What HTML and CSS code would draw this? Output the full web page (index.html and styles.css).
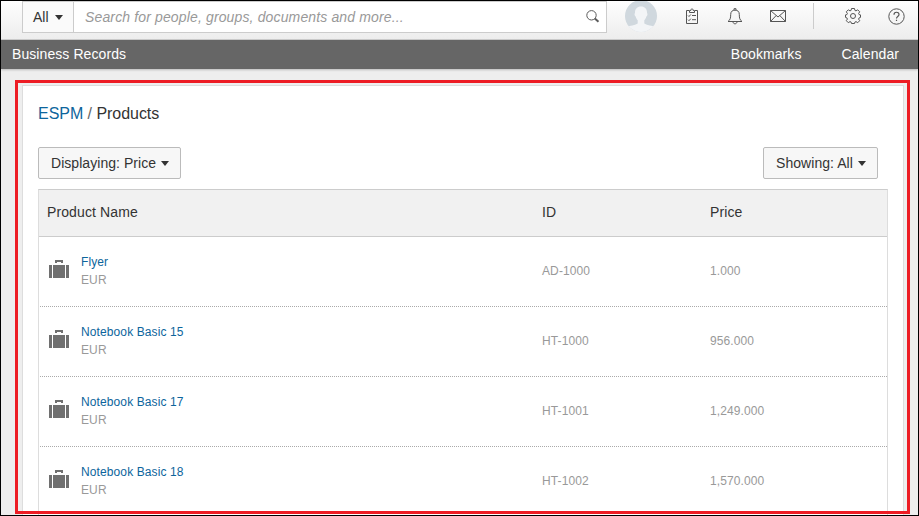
FILE: index.html
```html
<!DOCTYPE html>
<html lang="en">
<head>
<meta charset="utf-8">
<title>Products</title>
<link rel="stylesheet" href="styles.css">
</head>
<body>
<svg class="defs" width="0" height="0"><symbol id="case" viewBox="0 0 20 18"><path d="M0 5h3v13H0zM4 5h12v13H4zM17 5h3v13h-3zM6 0h8v3h-2V2H8v1H6z" fill="#707070"/></symbol></svg>
<div class="window">
  <header class="topbar">
    <div class="search">
      <div class="scope">All <i class="caret"></i></div>
      <div class="query"><span>Search for people, groups, documents and more...</span>
        <svg width="14" height="14" viewBox="0 0 14 14" fill="none" stroke="#5b5b5b"><circle cx="5.5" cy="5.3" r="4.700"/><path d="M8.800 8.400l3.700 3.300" stroke-width="2"/></svg>
      </div>
    </div>
    <svg class="avatar" width="32" height="32" viewBox="0 0 32 32"><defs><clipPath id="round"><circle cx="16" cy="15" r="16"/></clipPath></defs><g clip-path="url(#round)"><path d="M0-2h32v36H0z" fill="#d0d8de"/><path d="M16 5.500c-4 0-6.200 2.600-6 6.500-.8.600-.5 3 .7 3.600.4 1.700 1 2.700 2 3.700v3.200C9.500 24.500 5 24.500 2 26v8h28v-8c-3-1.500-7.500-1.500-10.700-3.500v-3.200c1-1 1.600-2 2-3.700 1.200-.6 1.500-3 .7-3.600.2-3.900-2-6.500-6-6.500z" fill="#f3f5f7"/></g></svg>
    <nav class="tools">
      <svg width="14" height="17" viewBox="0 0 14 17" fill="none" stroke="#555"><path d="M4 2.500H1.500v13h11v-13H10M4.500 4.500v-2l1.500-.2C6 .3 8 .3 8 2.300l1.500.2v2z"/><path d="M3 7.500l1 1 1.800-2M7 7.500h4M3 11.700l1 1 1.800-2M7 11.700h4"/></svg>
      <svg width="16" height="17" viewBox="0 0 16 17" fill="none" stroke="#555"><path d="M1 13.500c2.200-1.500 2.700-3.500 2.700-7C3.700 3.500 5.300 2.200 8 2.200s4.300 1.300 4.300 4.300c0 3.500.5 5.500 2.700 7zM7 2V.7h2V2M6 14c.3 2.400 3.700 2.400 4 0"/></svg>
      <svg width="17" height="13" viewBox="0 0 17 13" fill="none" stroke="#555"><path d="M.5.500h15v11H.5zM.5.500l7.500 6.500 7.500-6.500M.5 11.500l5.700-6M15.500 11.500l-5.700-6"/></svg>
      <i class="rule"></i>
      <svg width="16" height="16" viewBox="0 0 16 16" fill="none" stroke="#555"><circle cx="8" cy="8" r="2.500"/><path d="M6.500.5h3l.4 1.900 1.100.5 1.700-1.100 2 2-1.100 1.700.5 1.100 1.400.3v2.500l-1.400.5-.5 1.200 1.100 1.600-2 2-1.700-1.100-1.100.5-.4 1.400h-3l-.4-1.400-1.100-.5-1.700 1.100-2-2 1.100-1.600-.5-1.200-1.400-.5V6.900l1.400-.3.500-1.100-1.100-1.700 2-2L5 2.900l1.100-.5z"/></svg>
      <svg width="17" height="17" viewBox="0 0 17 17" fill="none" stroke="#555"><circle cx="8.500" cy="8.500" r="7.700"/><path d="M6 6.700C6 3.500 11 3.500 11 6.500c0 2-2.500 2-2.500 4M8.500 11.700v1.300" stroke-width="1.200"/></svg>
    </nav>
  </header>
  <nav class="mainnav"><span class="records">Business Records</span><span class="bookmarks">Bookmarks</span><span class="calendar">Calendar</span></nav>
  <main class="panel">
    <h1><a>ESPM</a> / <span>Products</span></h1>
    <div class="filters"><button>Displaying: Price <i class="caret"></i></button><button class="showing">Showing: All <i class="caret"></i></button></div>
    <div class="table">
      <div class="row head"><span>Product Name</span><span>ID</span><span>Price</span></div>
      <div class="row"><div class="product"><svg width="20" height="18"><use href="#case"/></svg><div><a>Flyer</a><p>EUR</p></div></div><span>AD-1000</span><span>1.000</span></div>
      <div class="row"><div class="product"><svg width="20" height="18"><use href="#case"/></svg><div><a>Notebook Basic 15</a><p>EUR</p></div></div><span>HT-1000</span><span>956.000</span></div>
      <div class="row"><div class="product"><svg width="20" height="18"><use href="#case"/></svg><div><a>Notebook Basic 17</a><p>EUR</p></div></div><span>HT-1001</span><span>1,249.000</span></div>
      <div class="row"><div class="product"><svg width="20" height="18"><use href="#case"/></svg><div><a>Notebook Basic 18</a><p>EUR</p></div></div><span>HT-1002</span><span>1,570.000</span></div>
    </div>
  </main>
  <div class="highlight"></div>
</div>
</body>
</html>
```
FILE: styles.css
```css
* { box-sizing: border-box; }
body { margin: 0; font: 14px/18px "Liberation Sans", Arial, sans-serif; color: #333; }
.defs { position: absolute; }
.window { position: relative; width: 919px; height: 516px; border: 1px solid #000; background: #eee; overflow: hidden; }
.topbar { display: flex; height: 39px; padding-left: 21px; background: linear-gradient(#fefefe, #ededed); border-bottom: 1px solid #ccc; }
.search { display: flex; width: 585px; height: 32px; background: #fff; border: 1px solid #ccc; }
.scope { display: flex; align-items: center; width: 51px; padding-left: 10px; border-right: 1px solid #ccc; background: #fafafa; gap: 6px; }
.caret { display: inline-block; border: 4.5px solid transparent; border-top: 5px solid #333; border-bottom: 0; }
.query { display: flex; flex: 1; align-items: center; justify-content: space-between; padding: 0 6px 0 11px; color: #999; font-style: italic; letter-spacing: .14px; }
.avatar { margin-left: 18px; }
.tools { display: flex; align-items: center; height: 30px; margin-left: 28px; }
.tools svg:nth-of-type(2) { margin-left: 28px; }
.tools svg:nth-of-type(3) { margin: 1px 0 0 27px; }
.rule { width: 1px; height: 26px; margin-left: 26px; background: #ccc; }
.tools svg:nth-of-type(4) { margin-left: 31px; }
.tools svg:nth-of-type(5) { margin-left: 27px; }
.mainnav { display: flex; align-items: center; height: 29px; padding: 0 19px 2px 11px; background: #666; color: #fff; box-shadow: 0 1px 2px #bbb; letter-spacing: .08px; }
.bookmarks { margin: 0 40px 0 auto; }
.panel { width: 882px; height: 440px; margin: 16px 0 0 21px; padding: 0 15px; background: #fff; border: 1px solid #ddd; }
h1 { margin: 18px 0 0; font-size: 16px; line-height: 20px; font-weight: 400; color: #666; letter-spacing: -.04px; }
h1 span { color: #333; }
a { color: #0d659c; }
.filters { display: flex; justify-content: space-between; margin-top: 23px; padding-right: 10px; }
button { display: flex; align-items: center; justify-content: space-between; width: 143px; height: 32px; padding: 0 11px 0 12px; background: #f7f7f7; border: 1px solid #bbb; border-radius: 2px; font: inherit; color: #333; letter-spacing: .05px; }
.showing { width: 115px; padding: 0 11px 0 12px; }
.table { width: 850px; margin-top: 10px; border: 1px solid #ddd; border-top-color: #ccc; }
.row { display: grid; grid-template-columns: 495px 168px 1fr; align-items: center; height: 70px; margin-left: 1px; padding: 0 0 2px 8px; border-bottom: 1px dotted #aaa; color: #999; font-size: 12px; letter-spacing: .11px; }
.row.head { height: 47px; margin-left: 0; padding-left: 8px; border-bottom: 1px solid #ccc; background: #f1f1f1; color: #333; font-size: 14px; }
.row:not(.head) { grid-template-columns: 494px 168px 1fr; }
.product { display: flex; align-items: center; gap: 12px; margin-left: 1px; }
.product svg { margin-top: -4px; }
.product a, .product p { display: block; margin: 0; line-height: 18px; }
.highlight { position: absolute; left: 14px; top: 79px; width: 895px; height: 434px; border: 3px solid #ed1c24; }
```
